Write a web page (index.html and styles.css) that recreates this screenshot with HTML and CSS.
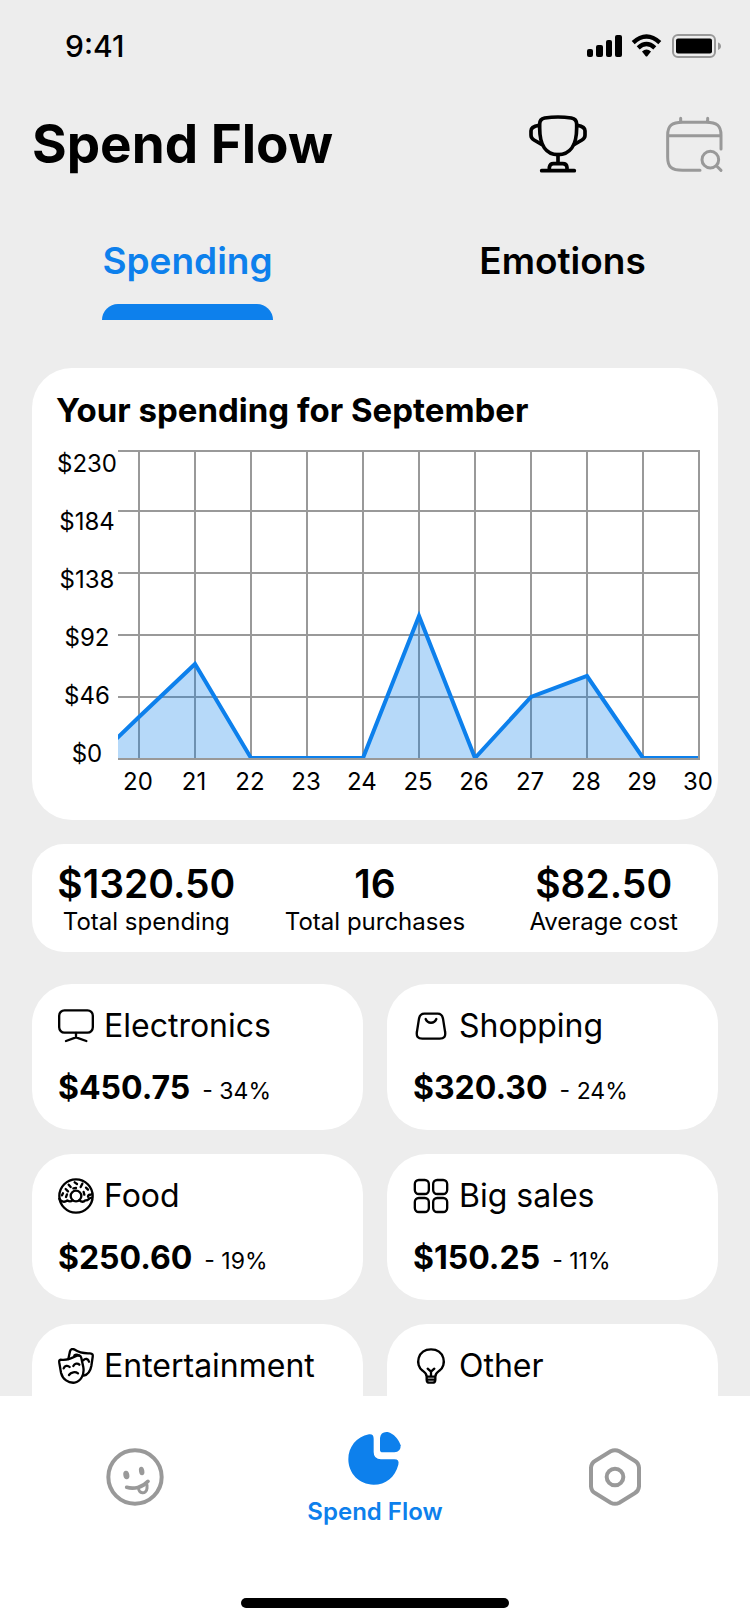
FILE: index.html
```html
<!DOCTYPE html>
<html lang="en">
<head>
  <meta charset="UTF-8" />
  <meta name="viewport" content="width=device-width, initial-scale=1.0"/>
  <title>Spend Flow</title>
  <link rel="stylesheet" href="styles.css">
</head>
<body>

  <div class="app">
    <div class="status-bar">
      <span>9:41</span>
      <svg class="status-icons" width="136" height="24" viewBox="0 0 136 24">
        <rect x="1" y="15" width="6" height="8" rx="2"/>
        <rect x="10" y="11" width="7" height="12" rx="2"/>
        <rect x="20" y="6" width="6" height="17" rx="2"/>
        <rect x="29" y="1" width="7" height="22" rx="2"/>
        <g fill="none" stroke="#000" stroke-width="4.4">
          <path d="M47.2 8.6Q60.5 -3.6 73.8 8.6"/>
          <path d="M52.2 13.8Q60.5 6.2 68.8 13.8"/>
        </g>
        <path d="M56 17.5Q60.5 13.5 65 17.5L61.5 22Q60.5 23 59.5 22Z"/>
        <rect x="87" y="1" width="42" height="22" rx="5" fill="none" stroke="#999" stroke-width="2"/>
        <rect x="90" y="4.5" width="36" height="15" rx="2"/>
        <path d="M132 8.5Q135 9.5 135 12.3Q135 15 132 16Z" fill="#999"/>
      </svg>
    </div>

    <header class="header">
      <h1>Spend Flow</h1>
      <div class="header-actions">
        <button type="button" class="icon-button" aria-label="Achievements">
          <svg viewBox="0 0 180 180" stroke="#000" stroke-width="11">
            <path d="M35 42V30Q35 15 50 12Q90 6 130 12Q146 15 146 30V42C146 95 125 122 90 122C55 122 35 95 35 42Z"/>
            <path d="M33 34Q9 38 9 50V64Q9 73 18 78L41 91M148 34Q171 38 171 50V64Q171 73 162 78L139 91M90 122V146M64 168V160Q66 149 76 149H104Q116 149 117 160V168M41 170H139"/>
          </svg>
        </button>
        <button type="button" class="icon-button" aria-label="Choose dates">
          <svg viewBox="0 0 180 180" stroke="#999" stroke-width="9">
            <path d="M171 105V64C171 35 159 25 126 25H56C23 25 11 35 11 64V130C11 159 22 169 56 169H108M11 65H171M50 13V25M131 13V25M158 156L171 169"/>
            <circle cx="139" cy="137" r="25"/>
          </svg>
        </button>
      </div>
    </header>

    <nav class="tabs">
      <button type="button" class="tab active">Spending</button>
      <button type="button" class="tab">Emotions</button>
    </nav>

    <main class="content">
      <section class="card chart-card">
        <h2>Your spending for September</h2>
        <svg class="chart" viewBox="0 0 686 360">
          <g class="chart-grid">
            <path d="M86 11H668M86 71H668M86 133H668M86 195H668M86 257H668"/>
            <path d="M107 10V320M163 10V320M219 10V320M275 10V320M331 10V320M387 10V320M443 10V320M499 10V320M555 10V320M611 10V320M667 10V320"/>
          </g>
          <clipPath id="plot"><rect x="86" y="10" width="580" height="308"/></clipPath>
          <g clip-path="url(#plot)">
            <path class="chart-area" d="M86 297L107 277L163 224L219 318H331L387 176L443 318L499 257L555 236L611 318H86Z"/>
            <path class="chart-line" d="M80 303L107 277L163 224L219 318H331L387 176L443 318L499 257L555 236L611 318H670"/>
          </g>
          <path class="chart-base" d="M86 319H668"/>
          <g class="chart-labels">
            <text x="55" y="32">$230</text>
            <text x="55" y="90">$184</text>
            <text x="55" y="148">$138</text>
            <text x="55" y="206">$92</text>
            <text x="55" y="264">$46</text>
            <text x="55" y="322">$0</text>
            <text x="106" y="350">20</text>
            <text x="162" y="350">21</text>
            <text x="218" y="350">22</text>
            <text x="274" y="350">23</text>
            <text x="330" y="350">24</text>
            <text x="386" y="350">25</text>
            <text x="442" y="350">26</text>
            <text x="498" y="350">27</text>
            <text x="554" y="350">28</text>
            <text x="610" y="350">29</text>
            <text x="666" y="350">30</text>
          </g>
        </svg>
      </section>

      <section class="card stats">
        <div class="stat"><strong>$1320.50</strong><span>Total spending</span></div>
        <div class="stat"><strong>16</strong><span>Total purchases</span></div>
        <div class="stat"><strong>$82.50</strong><span>Average cost</span></div>
      </section>

      <section class="categories">
        <article class="card category">
          <h3>
            <svg viewBox="0 0 108 108">
              <rect x="3.5" y="7" width="101" height="67" rx="16"/>
              <path d="M54 75V87M24 99L54 88L85 99"/>
            </svg>
            Electronics
          </h3>
          <p><strong>$450.75</strong> <span>- 34%</span></p>
        </article>
        <article class="card category">
          <h3>
            <svg viewBox="0 0 108 108">
              <path d="M34 17H74C85 17 88 22 90 32L96 70C99 86 93 92 80 92H28C15 92 9 86 12 70L18 32C20 22 23 17 34 17ZM38 33C44 48 64 48 70 33"/>
            </svg>
            Shopping
          </h3>
          <p><strong>$320.30</strong> <span>- 24%</span></p>
        </article>
        <article class="card category">
          <h3>
            <svg viewBox="0 0 108 108">
              <circle cx="54" cy="54" r="50"/>
              <circle cx="54" cy="54" r="16"/>
              <path d="M4 62C10 72 20 74 28 67C36 73 40 70 44 67M64 67C70 72 76 74 82 67C92 69 92 58 102 59M90 56C90 48 98 52 102 48"/>
              <path d="M32 20L38 27M50 13L57 18M73 17L68 27M46 31L54 30M23 33L30 40M84 29L90 35M15 46L12 52M27 49L24 57M77 42L79 50"/>
            </svg>
            Food
          </h3>
          <p><strong>$250.60</strong> <span>- 19%</span></p>
        </article>
        <article class="card category">
          <h3>
            <svg viewBox="0 0 108 108">
              <rect x="5.5" y="6" width="42" height="42" rx="12"/>
              <rect x="60.5" y="6" width="42" height="42" rx="12"/>
              <rect x="5.5" y="60" width="42" height="42" rx="12"/>
              <rect x="60.5" y="60" width="42" height="42" rx="12"/>
            </svg>
            Big sales
          </h3>
          <p><strong>$150.25</strong> <span>- 11%</span></p>
        </article>
        <article class="card category">
          <h3>
            <svg viewBox="0 0 108 108">
              <path d="M8 35C22 37 37 34 53 25C62 20 68 21 70 30L76 58C80 81 67 101 50 104C31 106 14 94 9 74L4 45C3 38 4 35 8 35Z"/>
              <path d="M31 33L36 10C38 3 42 2 48 4C63 14 79 17 96 16C104 16 105 20 104 27L100 54C97 70 89 80 77 83"/>
              <path d="M17 61C20 53 29 51 35 57M46 54C50 46 59 45 64 50M33 81C39 72 52 70 60 76M76 37C82 30 91 32 93 41M49 22C53 19 58 19 63 23"/>
            </svg>
            Entertainment
          </h3>
        </article>
        <article class="card category">
          <h3>
            <svg viewBox="0 0 108 108">
              <path d="M41 86C41 78 36 73 29 68C5 52 13 4 54 4C95 4 103 52 79 68C72 73 67 78 67 86V95C67 102 64 104 58 104H50C44 104 41 102 41 95ZM42 86H66M42 95H66M54 86V72M44 62L54 71L64 62"/>
            </svg>
            Other
          </h3>
        </article>
      </section>
    </main>

    <footer class="bottom-bar">
      <nav class="bottom-nav">
        <a href="#" class="nav-item" aria-label="Mood">
          <svg viewBox="0 0 180 180" fill="none" stroke="#999" stroke-width="12" stroke-linecap="round">
            <circle cx="90" cy="90" r="80"/>
            <path d="M65 121C86 127 112 122 129 103" stroke-width="11"/>
            <path d="M101 122C99 140 124 144 126 124V114" stroke-width="9"/>
            <g fill="#999" stroke="none">
              <ellipse cx="64" cy="84" rx="9" ry="13" transform="rotate(-10 64 84)"/>
              <ellipse cx="110" cy="72" rx="8" ry="13" transform="rotate(-10 110 72)"/>
            </g>
          </svg>
        </a>
        <a href="#" class="nav-item active">
          <svg viewBox="0 0 180 180" fill="#0d80ec">
            <path d="M72 13Q86 11 86 26V66Q86 88 108 88H148Q164 88 160 104C150 142 122 164 86 164C42 164 10 130 10 88C10 52 34 20 72 13Z"/>
            <path d="M105 24Q107 4 128 6C147 12 160 26 167 46Q168 66 148 67H113Q105 67 105 59Z"/>
          </svg>
          <span>Spend Flow</span>
        </a>
        <a href="#" class="nav-item" aria-label="Settings">
          <svg viewBox="0 0 180 180" fill="none" stroke="#999" stroke-width="12">
            <path d="M77 13Q90 6 103 13L149 41Q161 48 162 62V118Q161 132 149 139L103 167Q90 174 77 167L31 139Q19 132 18 118V62Q19 48 31 41Z"/>
            <circle cx="90" cy="90" r="25"/>
          </svg>
        </a>
      </nav>
      <div class="home-indicator"></div>
    </footer>
  </div>

</body>
</html>
```
FILE: styles.css
```css
* {
  box-sizing: border-box;
}

body {
  font-family: Inter, "Liberation Sans", sans-serif;
  background-color: #ededed;
  color: #000;
  margin: 0;
}

h1, h2, h3, p {
  margin: 0;
}

button {
  font: inherit;
  color: inherit;
  background: none;
  border: none;
  padding: 0;
  cursor: pointer;
}

.app {
  display: flex;
  flex-direction: column;
  height: 100vh;
}

.status-bar {
  display: flex;
  justify-content: space-between;
  align-items: center;
  padding: 28px 28px 0 65px;
  font-size: 30px;
  line-height: 36px;
  font-weight: 500;
}

.header {
  display: flex;
  justify-content: space-between;
  align-items: center;
  padding: 48px 26px 0 32px;
}

.header h1 {
  font-size: 53px;
  line-height: 64px;
  font-weight: 700;
}

.header-actions {
  display: flex;
  gap: 76px;
}

.icon-button {
  width: 60px;
  height: 60px;
}

.icon-button svg {
  display: block;
  fill: none;
  stroke-linecap: round;
  stroke-linejoin: round;
}

.tabs {
  display: grid;
  grid-template-columns: 1fr 1fr;
  justify-items: center;
  padding-top: 60px;
}

.tab {
  font-size: 37px;
  line-height: 50px;
  font-weight: 600;
}

.tab::after {
  content: "";
  display: block;
  height: 16px;
  margin-top: 18px;
  border-radius: 16px 16px 0 0;
}

.tab.active {
  color: #0d80ec;
}

.tab.active::after {
  background-color: #0d80ec;
}

.content {
  flex: 1;
  min-height: 0;
  overflow: hidden;
  padding: 48px 32px 0;
}

.card {
  background-color: #fff;
  border-radius: 40px;
}

.chart-card {
  padding: 22px 0 20px;
}

.chart-card h2 {
  padding: 0 24px;
  font-size: 33px;
  line-height: 40px;
  font-weight: 700;
}

.chart {
  display: block;
  width: 100%;
  margin-top: 10px;
}

.chart-grid, .chart-base {
  fill: none;
  stroke: #999;
  stroke-width: 2;
}

.chart-area {
  fill: #0d80ec;
  fill-opacity: 0.3;
}

.chart-line {
  fill: none;
  stroke: #0d80ec;
  stroke-width: 4;
}

.chart-labels {
  font-size: 24px;
  text-anchor: middle;
}

.stats {
  display: grid;
  grid-template-columns: repeat(3, 1fr);
  margin-top: 24px;
  padding: 16px 0;
  border-radius: 32px;
  text-align: center;
}

.stat strong {
  display: block;
  font-size: 39px;
  line-height: 48px;
  font-weight: 600;
}

.stat span {
  display: block;
  font-size: 24px;
  line-height: 28px;
}

.categories {
  display: grid;
  grid-template-columns: 1fr 1fr;
  grid-auto-rows: 1fr;
  gap: 24px;
  margin-top: 32px;
}

.category {
  padding: 20px 26px 22px;
}

.category h3 {
  display: flex;
  align-items: center;
  gap: 10px;
  font-size: 32px;
  line-height: 44px;
  font-weight: 400;
}

.category h3 svg {
  width: 36px;
  height: 36px;
  fill: none;
  stroke: #000;
  stroke-width: 7;
  stroke-linecap: round;
  stroke-linejoin: round;
}

.category p {
  display: flex;
  align-items: baseline;
  gap: 12px;
  margin-top: 20px;
}

.category p strong {
  font-size: 32px;
  line-height: 40px;
  font-weight: 700;
}

.category p span {
  font-size: 23px;
  line-height: 28px;
}

.bottom-bar {
  background-color: #fff;
  padding: 34px 15px 16px;
}

.bottom-nav {
  display: grid;
  grid-template-columns: repeat(3, 1fr);
  align-items: center;
}

.nav-item {
  display: flex;
  flex-direction: column;
  align-items: center;
  text-decoration: none;
  color: #999;
}

.nav-item svg {
  width: 60px;
  height: 60px;
}

.nav-item span {
  margin-top: 10px;
  font-size: 24px;
  line-height: 24px;
  font-weight: 600;
}

.nav-item.active {
  color: #0d80ec;
}

.home-indicator {
  width: 268px;
  height: 10px;
  margin: 74px auto 0;
  border-radius: 5px;
  background-color: #000;
}
```
